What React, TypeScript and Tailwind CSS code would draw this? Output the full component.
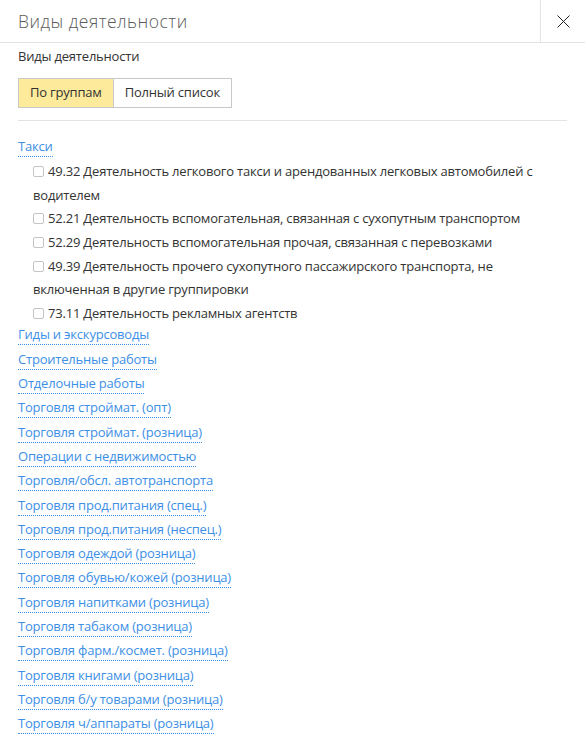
import React from "react";

const items: { code: string; text: string }[] = [
  { code: "49.32", text: "Деятельность легкового такси и арендованных легковых автомобилей с водителем" },
  { code: "52.21", text: "Деятельность вспомогательная, связанная с сухопутным транспортом" },
  { code: "52.29", text: "Деятельность вспомогательная прочая, связанная с перевозками" },
  { code: "49.39", text: "Деятельность прочего сухопутного пассажирского транспорта, не включенная в другие группировки" },
  { code: "73.11", text: "Деятельность рекламных агентств" },
];

const groups = [
  "Гиды и экскурсоводы",
  "Строительные работы",
  "Отделочные работы",
  "Торговля строймат. (опт)",
  "Торговля строймат. (розница)",
  "Операции с недвижимостью",
  "Торговля/обсл. автотранспорта",
  "Торговля прод.питания (спец.)",
  "Торговля прод.питания (неспец.)",
  "Торговля одеждой (розница)",
  "Торговля обувью/кожей (розница)",
  "Торговля напитками (розница)",
  "Торговля табаком (розница)",
  "Торговля фарм./космет. (розница)",
  "Торговля книгами (розница)",
  "Торговля б/у товарами (розница)",
  "Торговля ч/аппараты (розница)",
];

function Link({ children }: { children: React.ReactNode }) {
  return (
    <div className="leading-[24.3px] h-[24.3px]">
      <span className="text-[#3d8fe6] border-b border-dotted border-[#3d8fe6] pb-[1px] cursor-pointer">
        {children}
      </span>
    </div>
  );
}

export default function App() {
  return (
    <div
      className="w-[585px] h-[741px] bg-white overflow-hidden text-[13px] text-[#333] tracking-[-0.2px]"
      style={{ fontFamily: '"Open Sans", "Noto Sans", "Liberation Sans", sans-serif' }}
    >
      <div className="flex h-[43px] border-b border-[#e3e3e3]">
        <div className="flex-1 pl-[18px] flex items-center text-[17.5px] font-light text-[#5a5a5a] tracking-[0.5px]">
          Виды деятельности
        </div>
        <button className="w-[45px] border-l border-[#e3e3e3] flex items-center justify-center">
          <svg width="13" height="13" viewBox="0 0 13 13">
            <path d="M0.5 0.5 L12.5 12.5 M12.5 0.5 L0.5 12.5" stroke="#222" strokeWidth="1" />
          </svg>
        </button>
      </div>
      <div className="px-[18px]">
        <div className="mt-[4px] leading-[18px]">Виды деятельности</div>
        <div className="mt-[13px] flex">
          <button className="h-[30px] px-[11px] bg-[#fdeb9b] border border-[#c8c8c8] text-[#333]">
            По группам
          </button>
          <button className="h-[30px] px-[11px] bg-white border border-l-0 border-[#c8c8c8] text-[#333]">
            Полный список
          </button>
        </div>
        <div className="mt-[12px] h-px bg-[#e3e3e3]" />
        <div className="mt-[13px]">
          <Link>Такси</Link>
          <div className="pl-[15px] leading-[23.6px] mt-[2px] mb-[-3px]">
            {items.map((it) => (
              <div key={it.code}>
                <span className="inline-block w-[11px] h-[11px] border border-[#c4c4c4] rounded-[2px] align-[-1px] mr-[4px] bg-white" />
                {it.code} {it.text}
              </div>
            ))}
          </div>
          {groups.map((g) => (
            <Link key={g}>{g}</Link>
          ))}
        </div>
      </div>
    </div>
  );
}
